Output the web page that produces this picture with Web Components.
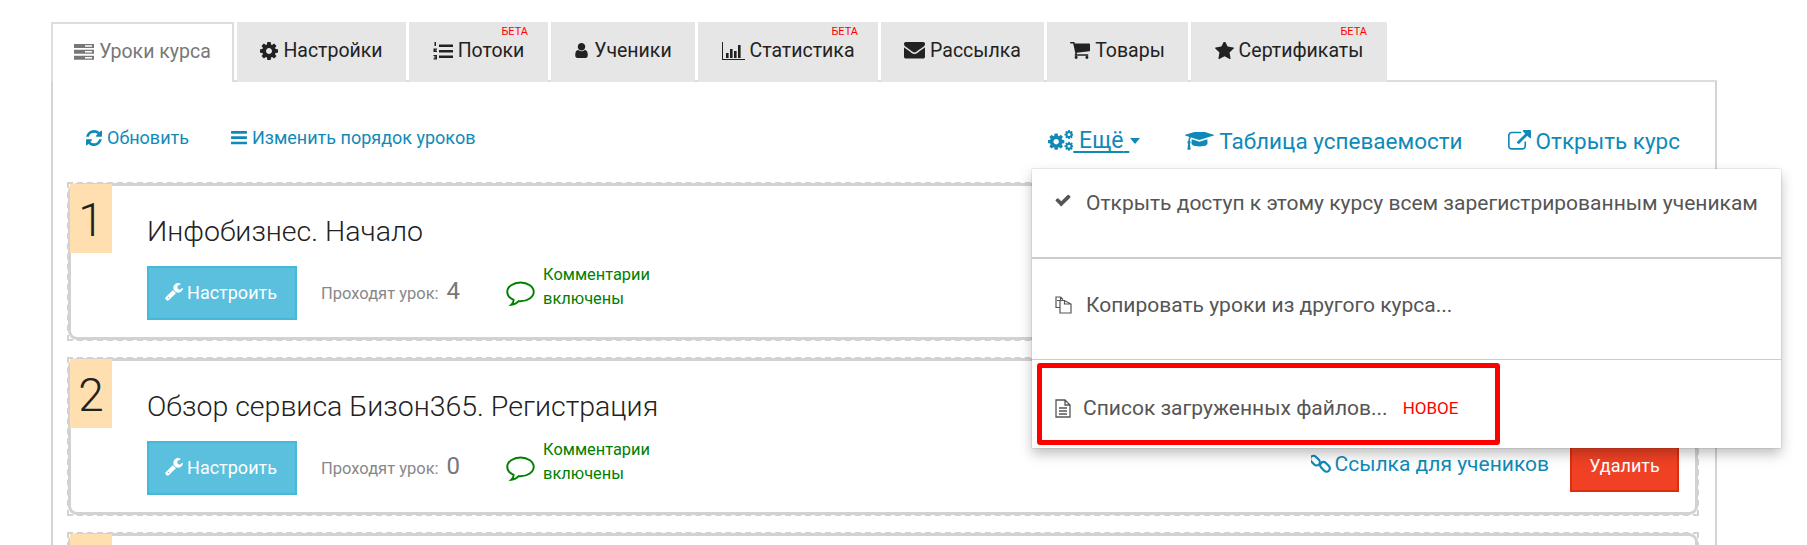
<!DOCTYPE html>
<html lang="ru"><head><meta charset="utf-8"><title>Уроки курса</title>
<style>
html,body{margin:0;height:545px;overflow:hidden;background:#fff}
body{font-family:Roboto,"Liberation Sans",sans-serif;color:#222}
</style></head><body>
<course-app>
  <tab-bar slot="tabs">
    <course-tab active w="183" icon="server" iw="20">Уроки курса</course-tab>
    <course-tab w="169" icon="cog" iw="18">Настройки</course-tab>
    <course-tab w="139" icon="listol" iw="20" beta>Потоки</course-tab>
    <course-tab w="144" icon="user" iw="15">Ученики</course-tab>
    <course-tab w="180" icon="chart" iw="23" beta>Статистика</course-tab>
    <course-tab w="163" icon="envelope" iw="21">Рассылка</course-tab>
    <course-tab w="141" icon="cart" iw="20">Товары</course-tab>
    <course-tab w="196" icon="star" iw="19" beta>Сертификаты</course-tab>
  </tab-bar>
  <action-link slot="left" icon="refresh" iw="16" gap="5" size="18">Обновить</action-link>
  <action-link slot="left" icon="bars" iw="16" gap="5" size="18">Изменить порядок уроков</action-link>
  <action-link slot="right" icon="cogs" iw="25" size="23" more>Ещё</action-link>
  <action-link slot="right" icon="cap" iw="29" gap="5" size="22.5">Таблица успеваемости</action-link>
  <action-link slot="right" icon="external" iw="23" gap="5" size="22.5">Открыть курс</action-link>
  <drop-menu slot="menu">
    <menu-item h="88" pad="22" icon="check" iw="16" gap="15" left="23">Открыть доступ к этому курсу всем зарегистрированным ученикам</menu-item>
    <menu-item h="102" pad="34" icon="files" iw="17" gap="14" left="23" rule="2">Копировать уроки из другого курса...</menu-item>
    <menu-item h="89" pad="36" icon="file" iw="16" gap="12" left="23" rule="1" marked>Список загруженных файлов...<span slot="tag">НОВОЕ</span></menu-item>
  </drop-menu>
  <lesson-card num="1" students="4">Инфобизнес. Начало</lesson-card>
  <lesson-card num="2" students="0" actions>Обзор сервиса Бизон365. Регистрация</lesson-card>
  <lesson-card blank></lesson-card>
</course-app>
<script>
const COG="M1152 896q0-106-75-181t-181-75-181 75-75 181 75 181 181 75 181-75 75-181zm512-109v222q0 12-8 23t-20 13l-185 28q-19 54-39 91 35 50 107 138 10 12 10 25t-9 23q-27 37-99 108t-94 71q-12 0-26-9l-138-108q-44 23-91 38-16 136-29 186-7 28-36 28h-222q-14 0-24.5-8.5t-11.5-21.5l-28-184q-49-16-90-37l-141 107q-10 9-25 9-14 0-25-11-126-114-165-168-7-10-7-23 0-12 8-23 15-21 51-66.5t54-70.5q-27-50-41-99l-183-27q-13-2-21-12.5t-8-23.5v-222q0-12 8-23t19-13l186-28q14-46 39-92-40-57-107-138-10-12-10-24 0-10 9-23 26-36 98.5-107.5t94.5-71.5q13 0 26 10l138 107q44-23 91-38 16-136 29-186 7-28 36-28h222q14 0 24.5 8.5t11.5 21.5l28 184q49 16 90 37l142-107q9-9 24-9 13 0 25 10 129 119 165 170 7 8 7 22 0 12-8 23-15 21-51 66.5t-54 70.5q26 50 41 98l183 28q13 2 21 12.5t8 23.5z";
const P=(d)=>`<path d="${d}"/>`;
const ICONS={
 cog:["128 128 1536 1536",P(COG)],
 user:["128 128 1536 1536",P("M1536 1399q0 109-62.5 187t-150.5 78h-854q-88 0-150.5-78t-62.5-187q0-85 8.5-160.5t31.5-152 58.5-131 94-89 134.5-34.5q131 128 313 128t313-128q76 0 134.5 34.5t94 89 58.5 131 31.5 152 8.5 160.5zm-256-887q0 159-112.5 271.5t-271.5 112.5-271.5-112.5-112.5-271.5 112.5-271.5 271.5-112.5 271.5 112.5 112.5 271.5z")],
 envelope:["0 256 1792 1408",P("M1792 710v794q0 66-47 113t-113 47h-1472q-66 0-113-47t-47-113v-794q44 49 101 87 362 246 497 345 57 42 92.5 65.5t94.5 48 110 24.5h2q51 0 110-24.5t94.5-48 92.5-65.5q170-123 498-345 57-39 100-87zm0-294q0 79-49 151t-122 123q-376 261-468 325-10 7-42.5 30.5t-54 38-52 32.5-57.5 27-50 9h-2q-23 0-50-9t-57.5-27-52-32.5-54-38-42.5-30.5q-91-64-262-182.5t-205-142.5q-62-42-117-115.5t-55-136.5q0-78 41.5-130t118.5-52h1472q65 0 112.5 47t47.5 113z")],
 star:["64 128 1664 1536",P("M1728 647q0 22-26 48l-363 354 86 500q1 7 1 20 0 21-10.5 35.5t-30.5 14.5q-19 0-40-12l-449-236-449 236q-22 12-40 12-21 0-31.5-14.5t-10.5-35.5q0-6 2-20l86-500-364-354q-25-27-25-48 0-37 56-46l502-73 225-455q19-41 49-41t49 41l225 455 502 73q56 9 56 46z")],
 cart:["64 256 1664 1408",P("M704 1536q0 52-38 90t-90 38-90-38-38-90 38-90 90-38 90 38 38 90zm896 0q0 52-38 90t-90 38-90-38-38-90 38-90 90-38 90 38 38 90zm128-1088v512q0 24-16.5 42.5t-40.5 21.5l-1044 122q13 60 13 70 0 16-24 64h920q26 0 45 19t19 45-19 45-45 19h-1024q-26 0-45-19t-19-45q0-11 8-31.5t16-36 21.5-40 15.5-29.5l-177-823h-204q-26 0-45-19t-19-45 19-45 45-19h256q16 0 28.5 6.5t19.5 15.5 13 24.5 8 26 5.5 29.5 4.5 26h1201q26 0 45 19t19 45z")],
 refresh:["128 128 1536 1536",P("M1639 1056q0 5-1 7-64 268-268 434.5t-478 166.5q-146 0-282.5-55t-243.5-157l-129 129q-19 19-45 19t-45-19-19-45v-448q0-26 19-45t45-19h448q26 0 45 19t19 45-19 45l-137 137q71 66 161 102t187 36q134 0 250-65t186-179q11-17 53-117 8-23 30-23h192q13 0 22.5 9.5t9.5 22.5zm25-800v448q0 26-19 45t-45 19h-448q-26 0-45-19t-19-45 19-45l138-138q-148-137-349-137-134 0-250 65t-186 179q-11 17-53 117-8 23-30 23h-199q-13 0-22.5-9.5t-9.5-22.5v-7q65-268 270-434.5t480-166.5q146 0 284 55.5t245 156.5l130-129q19-19 45-19t45 19 19 45z")],
 bars:["128 256 1536 1280",P("M1664 1344v128q0 26-19 45t-45 19h-1408q-26 0-45-19t-19-45v-128q0-26 19-45t45-19h1408q26 0 45 19t19 45zm0-512v128q0 26-19 45t-45 19h-1408q-26 0-45-19t-19-45v-128q0-26 19-45t45-19h1408q26 0 45 19t19 45zm0-512v128q0 26-19 45t-45 19h-1408q-26 0-45-19t-19-45v-128q0-26 19-45t45-19h1408q26 0 45 19t19 45z")],
 check:["64 256 1664 1300",P("M1671 566q0 40-28 68l-724 724-136 136q-28 28-68 28t-68-28l-136-136-362-362q-28-28-28-68t28-68l136-136q28-28 68-28t68 28l294 295 656-657q28-28 68-28t68 28l136 136q28 28 28 68z")],
 wrench:["64 128 1664 1664",P("M448 1472q0-26-19-45t-45-19-45 19-19 45 19 45 45 19 45-19 19-45zm644-420l-682 682q-37 37-90 37-52 0-91-37l-106-108q-38-36-38-90 0-53 38-91l681-681q39 98 114.5 173.5t173.5 114.5zm634-435q0 39-23 106-47 134-164.5 217.5t-258.5 83.5q-185 0-316.5-131.5t-131.5-316.5 131.5-316.5 316.5-131.5q58 0 121.5 16.5t107.5 46.5q16 11 16 28t-16 28l-293 169v224l193 107q5-3 79-48.5t135.5-81 70.5-35.5q15 0 23.5 10t8.5 25z")],
 cap:["0 256 2304 1500",P("M1774 836l18 316q4 69-82 128t-235 93.5-323 34.5-323-34.5-235-93.5-82-128l18-316 574 181q22 7 48 7t48-7zm530-324q0 23-22 31l-1120 352q-4 1-10 1t-10-1l-652-206q-43 34-71 111.5t-34 178.5q63 36 63 109 0 69-58 107l58 433q2 14-8 25-9 11-24 11h-192q-15 0-24-11-10-11-8-25l58-433q-58-38-58-107 0-73 65-111 11-207 98-330l-333-104q-22-8-22-31t22-31l1120-352q4-1 10-1t10 1l1120 352q22 8 22 31z")],
 external:["0 0 1792 1792",P("M1408 928v320q0 119-84.5 203.5t-203.5 84.5h-832q-119 0-203.5-84.5t-84.5-203.5v-832q0-119 84.5-203.5t203.5-84.5h704q14 0 23 9t9 23v64q0 14-9 23t-23 9h-704q-66 0-113 47t-47 113v832q0 66 47 113t113 47h832q66 0 113-47t47-113v-320q0-14 9-23t23-9h64q14 0 23 9t9 23zm384-864v512q0 26-19 45t-45 19-45-19l-176-176-652 652q-10 10-23 10t-23-10l-114-114q-10-10-10-23t10-23l652-652-176-176q-19-19-19-45t19-45 45-19h512q26 0 45 19t19 45z")],
 cogs:["0 0 2350 2000",`<g transform="translate(-128 200)">${P(COG)}</g><g transform="translate(1480 -60) scale(.55)">${P(COG)}</g><g transform="translate(1480 1030) scale(.55)">${P(COG)}</g>`],
 server:["0 0 20 16",`<path fill-rule="evenodd" d="M0 0h20v4H0zM11 1.2v1.6h7V1.2zM0 5.8h20v4H0zM11 7v1.6h7V7zM0 11.7h20v4H0zM11 12.9v1.6h7v-1.6z"/>`],
 listol:["0 0 20 20",`<path d="M6 3.500h14v2.500H6zM6 9h14v2.500H6zM6 14.500h14v2.500H6zM1.500 1h1.500v4H1.500zM.5 7.500h3.500v1.300H2.500v.7H4V11H.5zM.5 14h3.500v4.500H.5v-1.200h2V16.800H1.200v-1h1.300v-.6H.5z"/>`],
 chart:["0 0 23 18",`<path d="M0 0h1v17h22v1H0zM4 11h2.600v5H4zM8 7h2.600v9H8zM12 9h2.600v7H12zM16 3h2.600v13H16z"/>`],
 files:["0 0 17 18",`<path fill="none" stroke="currentColor" stroke-width="1.2" d="M5.500 1H1v10.500h3.500M5.500 1v3.500H2M5.500 1L8 3.500M9.500 4.500H5V17h11V8zM9.500 4.500V8H16"/>`],
 file:["0 0 16 19",`<path fill="none" stroke="currentColor" stroke-width="1.300" d="M1 1h9l5 5v12H1zM10 1v5h5M4 9h8M4 12h8M4 15h8"/>`],
 link:["0 0 20 20",`<g fill="none" stroke="currentColor" stroke-width="2.200"><rect x="-1.500" y="3.300" width="11" height="6.600" rx="3.300" transform="rotate(45 4 6.600)"/><rect x="8.500" y="9.500" width="11" height="6.600" rx="3.300" transform="rotate(45 14 12.800)"/></g>`],
 comment:["0 0 30 26",`<path fill="none" stroke="currentColor" stroke-width="2" d="M15 1.500C7.500 1.500 1.300 5.800 1.300 11.200c0 3.600 2.600 6.700 6.600 8.400 0 1.800-.8 3.600-2.400 5 3 -.3 5.700-1.700 7.600-3.800.6.100 1.200.100 1.900.100 7.500 0 13.700-4.300 13.700-9.700S22.500 1.500 15 1.500z"/>`],
};
function icon(name,w){const [vb,b]=ICONS[name];const [,,vw,vh]=vb.split(' ').map(Number);
 return `<svg part="ic" width="${w}" height="${(w*vh/vw).toFixed(2)}" viewBox="${vb}" fill="currentColor" style="flex:none;display:block">${b}</svg>`;}
function define(tag,css,html){customElements.define(tag,class extends HTMLElement{
 constructor(){super();this.attachShadow({mode:'open'});}
 connectedCallback(){const a=n=>this.getAttribute(n);this.shadowRoot.innerHTML=`<style>${css}</style>`+html(a,this);}
});}
define('course-app',`
 :host{display:block;padding:22px 90px 0 51px;font-family:Roboto,"Liberation Sans",sans-serif}
 .panel{position:relative;border:2px solid #d4d4d4;border-top-color:#ddd;border-bottom:0;padding:0 16px 0 14px;height:465px;margin-top:-2px;box-sizing:border-box}
 .bar{display:flex;justify-content:space-between;height:100px;padding:0 19px;box-sizing:border-box}
 .l{display:flex;gap:42px;align-items:center;margin-top:12px}
 .r{display:flex;gap:45px;align-items:center;margin-top:18px}
 ::slotted(drop-menu){position:absolute;top:87px;right:-66px}
`,()=>`<slot name="tabs"></slot><div class="panel"><div class="bar"><div class="l"><slot name="left"></slot></div><div class="r"><slot name="right"></slot></div></div><slot name="menu"></slot><slot></slot></div>`);
define('tab-bar',`:host{display:flex;gap:3px;position:relative;z-index:1}`,()=>`<slot></slot>`);
define('course-tab',`
 :host{display:flex;box-sizing:border-box;height:60px;position:relative;background:#e6e6e6;color:#222;font-size:19.5px;align-items:center;justify-content:center;gap:5px;padding-bottom:3px}
 :host([active]){background:#fff;color:#777;border:2px solid #ddd;border-bottom:0}
 .b{position:absolute;top:3px;right:20px;font-size:11px;line-height:13px;color:#f00}
`,(a,h)=>{h.style.flex=`0 0 ${a('w')}px`;return icon(a('icon'),a('iw'))+`<slot></slot>`+(h.hasAttribute('beta')?`<span class="b">БЕТА</span>`:'');});
define('action-link',`
 :host{display:flex;align-items:center;color:#0f8ab8;line-height:1.2;white-space:pre}
 u{text-decoration-thickness:2px;text-underline-offset:3px}
 .c{width:0;height:0;border:5px solid transparent;border-top:6px solid currentColor;border-bottom:0;margin-left:1px}
`,(a,h)=>{h.style.fontSize=a('size')+'px';
 if(h.hasAttribute('more'))return icon(a('icon'),a('iw'))+`<u> <slot></slot> </u><span class="c"></span>`;
 return icon(a('icon'),a('iw')).replace('flex:none;',`flex:none;margin-right:${a('gap')}px;`)+`<slot></slot>`;});
define('drop-menu',`:host{display:block;width:749px;background:#fff;box-shadow:0 6px 12px rgba(0,0,0,.25),0 0 1px rgba(0,0,0,.4);z-index:5}`,()=>`<slot></slot>`);
define('menu-item',`
 :host{display:flex;position:relative;box-sizing:border-box;color:#555;font-size:21px;line-height:24px;align-items:flex-start}
 svg{margin-top:3px}
 .tag{color:#f00;font-size:17px;margin-left:15px}
 .frame{position:absolute;left:5px;top:3px;width:463px;height:82px;box-sizing:border-box;border:5px solid #f00;border-radius:3px}
`,(a,h)=>{h.style.height=a('h')+'px';h.style.paddingTop=a('pad')+'px';h.style.paddingLeft=a('left')+'px';
 if(a('rule')){h.style.borderTop=a('rule')+'px solid #ccc';}
 return icon(a('icon'),a('iw')).replace('flex:none;',`flex:none;margin-right:${a('gap')}px;`)+`<slot></slot><span class="tag"><slot name="tag"></slot></span>`+(h.hasAttribute('marked')?`<span class="frame"></span>`:'');});
define('lesson-card',`
 :host{display:block;box-sizing:border-box;height:159px;border:2px dashed #d2d2d2;margin-bottom:16px}
 .in{height:100%;box-sizing:border-box;background:#fff;border:2px solid #d2d2d2;border-radius:8px;display:flex;box-shadow:0 0 0 1px #d2d2d2}
 .n{flex:none;box-sizing:border-box;width:42px;height:69px;padding-top:3px;margin:-2px 0 0 -1px;background:#ffdfb0;font-size:46px;font-weight:300;line-height:66px;text-align:center;color:#222}
 .c{flex:1;min-width:0;padding:29px 16px 0 35px}
 h3{margin:0;font-size:28.5px;font-weight:300;line-height:34px;color:#222}
 .row{display:flex;align-items:center;margin-top:17px}
 .btn{box-sizing:border-box;display:flex;align-items:center;justify-content:center;gap:4px;height:54px;font-size:18px;color:#fff}
 .cfg{width:150px;background:#5bc0de;border:2px solid #46b8da;padding:0 2px 2px 0}
 .st{margin-left:24px;color:#888;font-size:16.5px}
 .k{margin-left:8px;color:#777;font-size:24px;line-height:24px;margin-top:-4px}
 .cm{margin-left:46px;color:#008000;margin-top:2px}
 .tx{margin-left:8px;color:#008000;font-size:16.4px;line-height:24px;margin-top:-12px}
 .lnk{margin-left:auto;display:flex;align-items:center;gap:4px;color:#0f8ab8;font-size:21px;margin-top:-8px}
 .del{width:109px;background:#f04124;border:2px solid #de2d0f;margin:-6px 0 0 21px;font-size:18px}
`,(a,h)=>{
 if(h.hasAttribute('blank'))return `<div class="in"><div class="n"></div></div>`;
 return `<div class="in"><div class="n">${a('num')}</div><div class="c"><h3><slot></slot></h3><div class="row">
 <div class="btn cfg">${icon('wrench',18)}Настроить</div>
 <span class="st">Проходят урок:</span><span class="k">${a('students')}</span>
 <span class="cm">${icon('comment',29)}</span><span class="tx">Комментарии<br>включены</span>
 ${h.hasAttribute('actions')?`<span class="lnk">${icon('link',20)}Ссылка для учеников</span><div class="btn del">Удалить</div>`:''}
 </div></div></div>`;});
</script>
</body></html>
